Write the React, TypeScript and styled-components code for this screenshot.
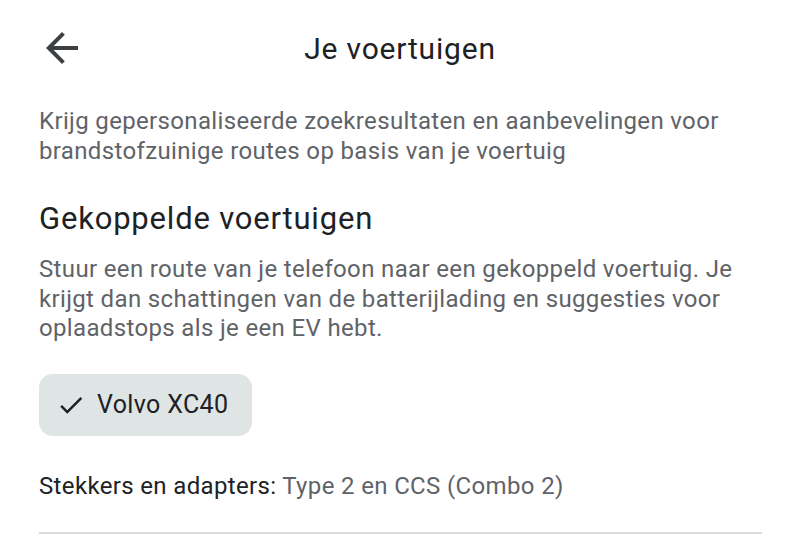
import styled, { createGlobalStyle } from "styled-components";

const GlobalStyle = createGlobalStyle`
  html, body {
    margin: 0;
    padding: 0;
    background: #ffffff;
  }
  body {
    font-family: Roboto, "Noto Sans", Arial, sans-serif;
    -webkit-font-smoothing: antialiased;
  }
`;

const Page = styled.div`
  width: 800px;
  height: 549px;
  overflow: hidden;
  background: #ffffff;
`;

const Header = styled.div`
  display: grid;
  grid-template-columns: 96px 1fr 96px;
  align-items: center;
  height: 96px;
`;

const BackButton = styled.button`
  border: 0;
  background: none;
  padding: 0;
  margin-left: 38px;
  width: 48px;
  height: 48px;
  display: flex;
  align-items: center;
  justify-content: center;
  color: #3c4043;
  cursor: pointer;
`;

const Title = styled.h1`
  margin: 0;
  text-align: center;
  font-size: 30px;
  letter-spacing: 0.8px;
  font-weight: 400;
  color: #202124;
`;

const Content = styled.div`
  padding: 0 30px 0 39px;
`;

const Text = styled.p<{ $mt?: number }>`
  margin: ${(p) => p.$mt ?? 0}px 0 0;
  font-size: 24px;
  letter-spacing: 0.35px;
  line-height: 29.5px;
  color: #5f6368;
`;

const SectionTitle = styled.h2`
  margin: 34px 0 0;
  font-size: 31px;
  letter-spacing: 0.8px;
  line-height: 38px;
  font-weight: 400;
  color: #202124;
`;

const Chip = styled.div`
  display: inline-flex;
  align-items: center;
  gap: 11px;
  margin-top: 30px;
  height: 62px;
  padding: 0 24px 0 17px;
  border-radius: 14px;
  background: #dfe4e5;
  font-size: 25px;
  letter-spacing: 0.35px;
  color: #202124;
`;

const Connectors = styled.p`
  margin: 35px 0 0;
  font-size: 24px;
  letter-spacing: 0.35px;
  line-height: 30px;
  color: #202124;
`;

const Muted = styled.span`
  color: #5f6368;
`;

const Divider = styled.hr`
  margin: 31px 8px 0 0;
  border: 0;
  height: 2px;
  background: #dadce0;
`;

export default function App() {
  return (
    <Page>
      <GlobalStyle />
      <Header>
        <BackButton aria-label="Terug">
          <svg width="48" height="48" viewBox="0 0 24 24" fill="currentColor">
            <path d="M20 11H7.83l5.59-5.59L12 4l-8 8 8 8 1.41-1.41L7.83 13H20v-2z" />
          </svg>
        </BackButton>
        <Title>Je voertuigen</Title>
        <div />
      </Header>
      <Content>
        <Text $mt={11}>
          Krijg gepersonaliseerde zoekresultaten en aanbevelingen voor
          brandstofzuinige routes op basis van je voertuig
        </Text>
        <SectionTitle>Gekoppelde voertuigen</SectionTitle>
        <Text $mt={17}>
          Stuur een route van je telefoon naar een gekoppeld voertuig. Je
          krijgt dan schattingen van de batterijlading en suggesties voor
          oplaadstops als je een EV hebt.
        </Text>
        <Chip>
          <svg width="30" height="30" viewBox="0 0 24 24" fill="currentColor">
            <path d="M9 16.17 4.83 12l-1.42 1.41L9 19 21 7l-1.41-1.41z" />
          </svg>
          Volvo XC40
        </Chip>
        <Connectors>
          Stekkers en adapters: <Muted>Type 2 en CCS (Combo 2)</Muted>
        </Connectors>
        <Divider />
      </Content>
    </Page>
  );
}
